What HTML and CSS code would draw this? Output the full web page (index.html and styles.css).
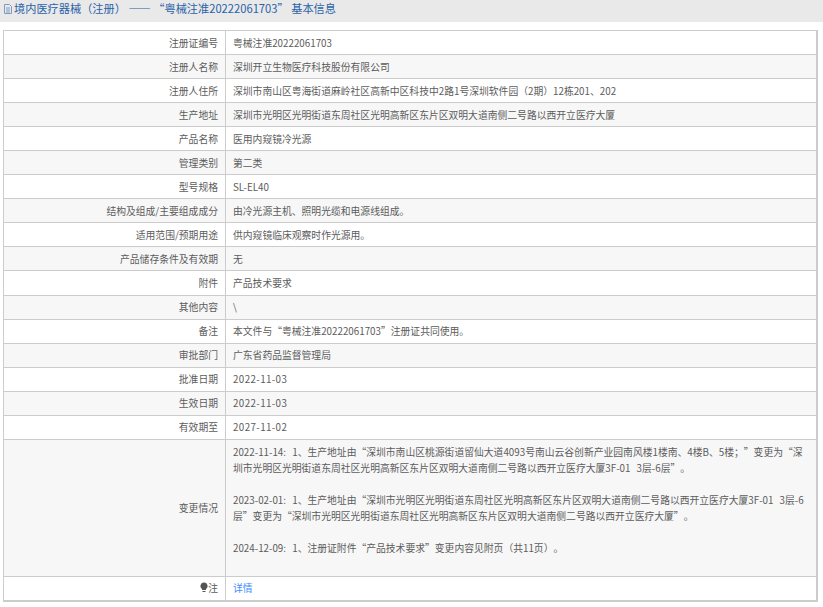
FILE: index.html
```html
<!DOCTYPE html>
<html lang="zh-CN">
<head>
    <meta charset="UTF-8">
    <title>基本信息</title>
    <link rel="stylesheet" href="styles.css">
</head>
<body>
    <div class="page-title">
        <svg class="title-icon" width="10" height="12" viewBox="0 0 10 12"><path d="M1.5 1.5h5l2 2v7h-7z M3 5h4 M3 7h4 M3 9h4" fill="none" stroke="#7f9bc4" stroke-width="1"/></svg>
        <span>境内医疗器械（注册） —— “粤械注准20222061703” 基本信息</span>
    </div>

    <table class="info-table">
        <tr><th>注册证编号</th><td>粤械注准20222061703</td></tr>
        <tr><th>注册人名称</th><td>深圳开立生物医疗科技股份有限公司</td></tr>
        <tr><th>注册人住所</th><td>深圳市南山区粤海街道麻岭社区高新中区科技中2路1号深圳软件园（2期）12栋201、202</td></tr>
        <tr><th>生产地址</th><td>深圳市光明区光明街道东周社区光明高新区东片区双明大道南侧二号路以西开立医疗大厦</td></tr>
        <tr><th>产品名称</th><td>医用内窥镜冷光源</td></tr>
        <tr><th>管理类别</th><td>第二类</td></tr>
        <tr><th>型号规格</th><td>SL-EL40</td></tr>
        <tr><th>结构及组成/主要组成成分</th><td>由冷光源主机、照明光缆和电源线组成。</td></tr>
        <tr><th>适用范围/预期用途</th><td>供内窥镜临床观察时作光源用。</td></tr>
        <tr><th>产品储存条件及有效期</th><td>无</td></tr>
        <tr><th>附件</th><td>产品技术要求</td></tr>
        <tr><th>其他内容</th><td>\</td></tr>
        <tr><th>备注</th><td>本文件与“粤械注准20222061703”注册证共同使用。</td></tr>
        <tr><th>审批部门</th><td>广东省药品监督管理局</td></tr>
        <tr><th>批准日期</th><td class="date">2022-11-03</td></tr>
        <tr><th>生效日期</th><td class="date">2022-11-03</td></tr>
        <tr><th>有效期至</th><td class="date">2027-11-02</td></tr>
        <tr class="changes-row">
            <th>变更情况</th>
            <td>2022-11-14: 1、生产地址由“深圳市南山区桃源街道留仙大道4093号南山云谷创新产业园南风楼1楼南、4楼B、5楼；”变更为“深圳市光明区光明街道东周社区光明高新区东片区双明大道南侧二号路以西开立医疗大厦3F-01 3层-6层”。<br><br>2023-02-01: 1、生产地址由“深圳市光明区光明街道东周社区光明高新区东片区双明大道南侧二号路以西开立医疗大厦3F-01 3层-6层”变更为“深圳市光明区光明街道东周社区光明高新区东片区双明大道南侧二号路以西开立医疗大厦”。<br><br>2024-12-09: 1、注册证附件“产品技术要求”变更内容见附页（共11页）。<br><br></td>
        </tr>
        <tr>
            <th><svg class="note-icon" width="8" height="11" viewBox="0 0 8 11"><path d="M4 .5a3.5 3.5 0 0 1 2 6.4V8H2V6.9A3.5 3.5 0 0 1 4 .5z M2.5 9h3v1h-3z" fill="#555"/></svg>注</th>
            <td><a href="#" class="detail-link">详情</a></td>
        </tr>
    </table>
</body>
</html>
```

FILE: styles.css
```css
body {
    font-family: "Noto Sans CJK SC", "Noto Sans", sans-serif;
    font-size: 9.8px;
    margin: 0;
    padding: 0 5px 0 3px;
    background: white;
    color: #5c5c5c;
    text-spacing-trim: space-all;
}

.page-title {
    margin: 0 -5px 8px -3px;
    padding: 0 3px;
    height: 22px;
    line-height: 17px;
    background: #e9e9e9;
    color: #2a62a8;
    font-size: 11.2px;
    display: flex;
    align-items: flex-start;
    gap: 1px;
}

.title-icon {
    margin-top: 3px;
    flex: none;
}

.info-table {
    width: 815px;
    table-layout: fixed;
    border-collapse: collapse;
    border: 1px solid #ccc;
    border-right-width: 2px;
    border-bottom-width: 2px;
}

.info-table th,
.info-table td {
    border: 1px solid #ccc;
    height: 23.06px;
    padding: 0 7px;
    line-height: 16px;
    font-weight: normal;
}

.info-table th {
    width: 207px;
    text-align: right;
}

.info-table td {
    text-align: left;
}

.info-table td.date {
    letter-spacing: .4px;
}

.info-table tr:nth-child(even) {
    background: #f7f7f7;
}

.changes-row td {
    padding-top: 4px;
    padding-bottom: 4px;
    word-spacing: 4px;
}

.note-icon {
    vertical-align: -1px;
}

.detail-link {
    color: #3c8cff;
    text-decoration: none;
}
```
